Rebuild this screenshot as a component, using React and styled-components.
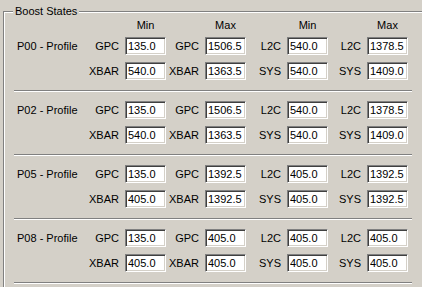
import React from 'react';
import styled, { createGlobalStyle } from 'styled-components';

const GlobalStyle = createGlobalStyle`
  html, body {
    margin: 0;
    padding: 0;
    background: #d4d0c8;
    overflow: hidden;
  }
  body {
    font-family: "Liberation Sans", Arial, sans-serif;
    font-size: 11px;
    color: #000;
  }
`;

const Window = styled.div`
  width: 422px;
  height: 287px;
  overflow: hidden;
  background: #d4d0c8;
  padding: 5px 0 0 3px;
  box-sizing: border-box;
`;

// legend sits centred on the top border, so the border ends up at y=11
const GroupBox = styled.fieldset`
  margin: 0;
  padding: 0 0 0 10px;
  width: 460px;
  height: 320px;
  box-sizing: border-box;
  border: 1px solid #808080;
  box-shadow: inset 1px 1px 0 #fff;
`;

const Legend = styled.legend`
  padding: 0 2px;
  margin-left: -1px;
  line-height: 13px;
  background: #d4d0c8;
`;

const COLS = '71px 81px 80px 82px 80px';

const HeaderRow = styled.div`
  display: grid;
  grid-template-columns: ${COLS};
  width: 398px;
  line-height: 13px;
  height: 13px;
  padding-top: 1px;
`;

const HeaderCell = styled.div`
  display: flex;
  justify-content: flex-end;

  span {
    width: 41px;
    text-align: center;
  }
`;

const Section = styled.div`
  display: grid;
  grid-template-columns: ${COLS};
  grid-template-rows: 18px 18px;
  row-gap: 7px;
  width: 398px;
  padding: ${({ $first }) => ($first ? '5px' : '10px')} 0 10px;
  border-bottom: 1px solid #808080;
  box-shadow: 0 1px 0 #fff;
`;

const ProfileName = styled.div`
  grid-row: 1;
  grid-column: 1;
  align-self: center;
  padding-left: 3px;
  white-space: nowrap;
`;

const Field = styled.label`
  grid-row: ${({ $row }) => $row};
  grid-column: ${({ $col }) => $col};
  display: flex;
  justify-content: flex-end;
  align-items: center;
  gap: 6px;
  white-space: nowrap;
`;

const Edit = styled.input`
  width: 41px;
  height: 18px;
  box-sizing: border-box;
  margin: 0;
  padding: 0 0 0 2px;
  border: 1px solid;
  border-color: #808080 #fff #fff #808080;
  box-shadow: inset 1px 1px 0 #404040, inset -1px -1px 0 #d4d0c8;
  background: #fff;
  color: #000;
  font-family: "Liberation Sans", Arial, sans-serif;
  font-size: 11px;
  outline: none;
`;

const headers = ['Min', 'Max', 'Min', 'Max'];
const topLabels = ['GPC', 'GPC', 'L2C', 'L2C'];
const bottomLabels = ['XBAR', 'XBAR', 'SYS', 'SYS'];

const profiles = [
  { name: 'P00 - Profile', top: ['135.0', '1506.5', '540.0', '1378.5'], bottom: ['540.0', '1363.5', '540.0', '1409.0'] },
  { name: 'P02 - Profile', top: ['135.0', '1506.5', '540.0', '1378.5'], bottom: ['540.0', '1363.5', '540.0', '1409.0'] },
  { name: 'P05 - Profile', top: ['135.0', '1392.5', '405.0', '1392.5'], bottom: ['405.0', '1392.5', '405.0', '1392.5'] },
  { name: 'P08 - Profile', top: ['135.0', '405.0', '405.0', '405.0'], bottom: ['405.0', '405.0', '405.0', '405.0'] }
];

const App = () => (
  <>
    <GlobalStyle />
    <Window>
      <GroupBox>
        <Legend>Boost States</Legend>
        <HeaderRow>
          <div />
          {headers.map((h, i) => (
            <HeaderCell key={i}><span>{h}</span></HeaderCell>
          ))}
        </HeaderRow>
        {profiles.map((p, idx) => (
          <Section key={p.name} $first={idx === 0}>
            <ProfileName>{p.name}</ProfileName>
            {p.top.map((v, i) => (
              <Field key={'t' + i} $row={1} $col={i + 2}>
                {topLabels[i]}
                <Edit readOnly defaultValue={v} />
              </Field>
            ))}
            {p.bottom.map((v, i) => (
              <Field key={'b' + i} $row={2} $col={i + 2}>
                {bottomLabels[i]}
                <Edit readOnly defaultValue={v} />
              </Field>
            ))}
          </Section>
        ))}
      </GroupBox>
    </Window>
  </>
);

export default App;
